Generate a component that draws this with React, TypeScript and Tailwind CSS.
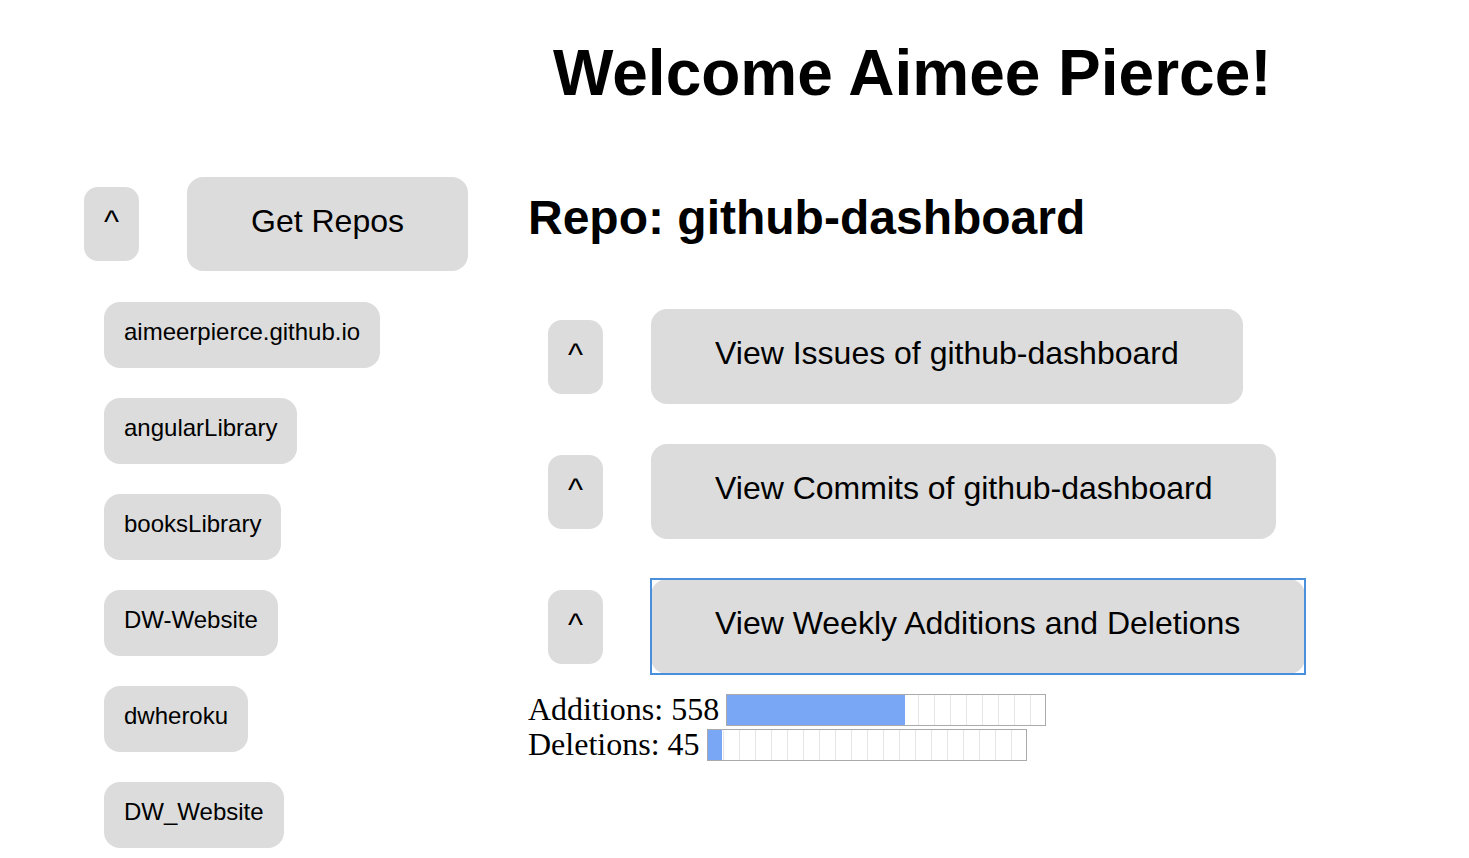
import React, { useState } from 'react';

const repos = ['aimeerpierce.github.io', 'angularLibrary', 'booksLibrary', 'DW-Website', 'dwheroku', 'DW_Website'];

const Meter: React.FC<{ value: number; max: number }> = ({ value, max }) => (
    <div className="relative ml-[7px] h-[32px] w-[320px] border border-[#aaaaaa] bg-[repeating-linear-gradient(90deg,transparent_0,transparent_15px,#e6e6e6_15px,#e6e6e6_16px)]">
        <div className="h-full bg-[#7aa7f5]" style={{ width: `${(value / max) * 100}%` }} />
    </div>
);

const Caret: React.FC = () => (
    <button className="rounded-[14px] bg-[#dcdcdc] px-[20px] pb-[22px] pt-[16px] text-[32px] leading-[36px] text-black">^</button>
);

const App: React.FC = () => {
    const [selected] = useState('github-dashboard');
    const sections = [`View Issues of ${selected}`, `View Commits of ${selected}`, 'View Weekly Additions and Deletions'];

    return (
        <div className="flex min-h-screen items-start bg-white font-['Liberation_Sans',Arial,sans-serif] text-black">
            {/* Sidebar */}
            <div className="flex w-[528px] shrink-0 flex-col pl-[84px] pt-[177px]">
                <div className="flex items-center gap-[48px]">
                    <Caret />
                    <button className="rounded-[16px] bg-[#dcdcdc] px-[64px] pb-[32px] pt-[26px] text-[32px] leading-[36px]">Get Repos</button>
                </div>
                <div className="ml-[20px] mt-[31px] flex flex-col items-start gap-[30px]">
                    {repos.map(r => (
                        <button key={r} className="rounded-[16px] bg-[#dcdcdc] px-[20px] pb-[22px] pt-[16px] text-[24px] leading-[28px]">{r}</button>
                    ))}
                </div>
            </div>

            {/* Main */}
            <div className="flex flex-col pt-[36px]">
                <h1 className="pl-[25px] text-[64px] font-bold leading-[74px]">Welcome Aimee Pierce!</h1>
                <h2 className="mt-[80px] text-[48px] font-bold leading-[55px]">Repo: {selected}</h2>
                <div className="ml-[20px] mt-[64px] flex flex-col gap-[40px]">
                    {sections.map((s, i) => (
                        <div key={s} className="flex items-center gap-[48px]">
                            <Caret />
                            {i === 2 ? (
                                <div className="outline outline-2 outline-offset-[-1px] outline-[#4a8fdc]">
                                    <button className="block rounded-[16px] bg-[#dcdcdc] pb-[32px] pl-[64px] pr-[65px] pt-[26px] text-[32px] leading-[37px]">{s}</button>
                                </div>
                            ) : (
                                <button className="rounded-[16px] bg-[#dcdcdc] px-[64px] pb-[32px] pt-[26px] text-[32px] leading-[37px]">{s}</button>
                            )}
                        </div>
                    ))}
                </div>
                <div className="mt-[18px] flex flex-col font-['Liberation_Serif','Times_New_Roman',serif] text-[32px]">
                    <div className="flex h-[35px] items-center">
                        <span className="leading-[37px]">Additions: 558</span>
                        <Meter value={558} max={1000} />
                    </div>
                    <div className="flex h-[35px] items-center">
                        <span className="leading-[37px]">Deletions: 45</span>
                        <Meter value={45} max={1000} />
                    </div>
                </div>
            </div>
        </div>
    );
};

export default App;
